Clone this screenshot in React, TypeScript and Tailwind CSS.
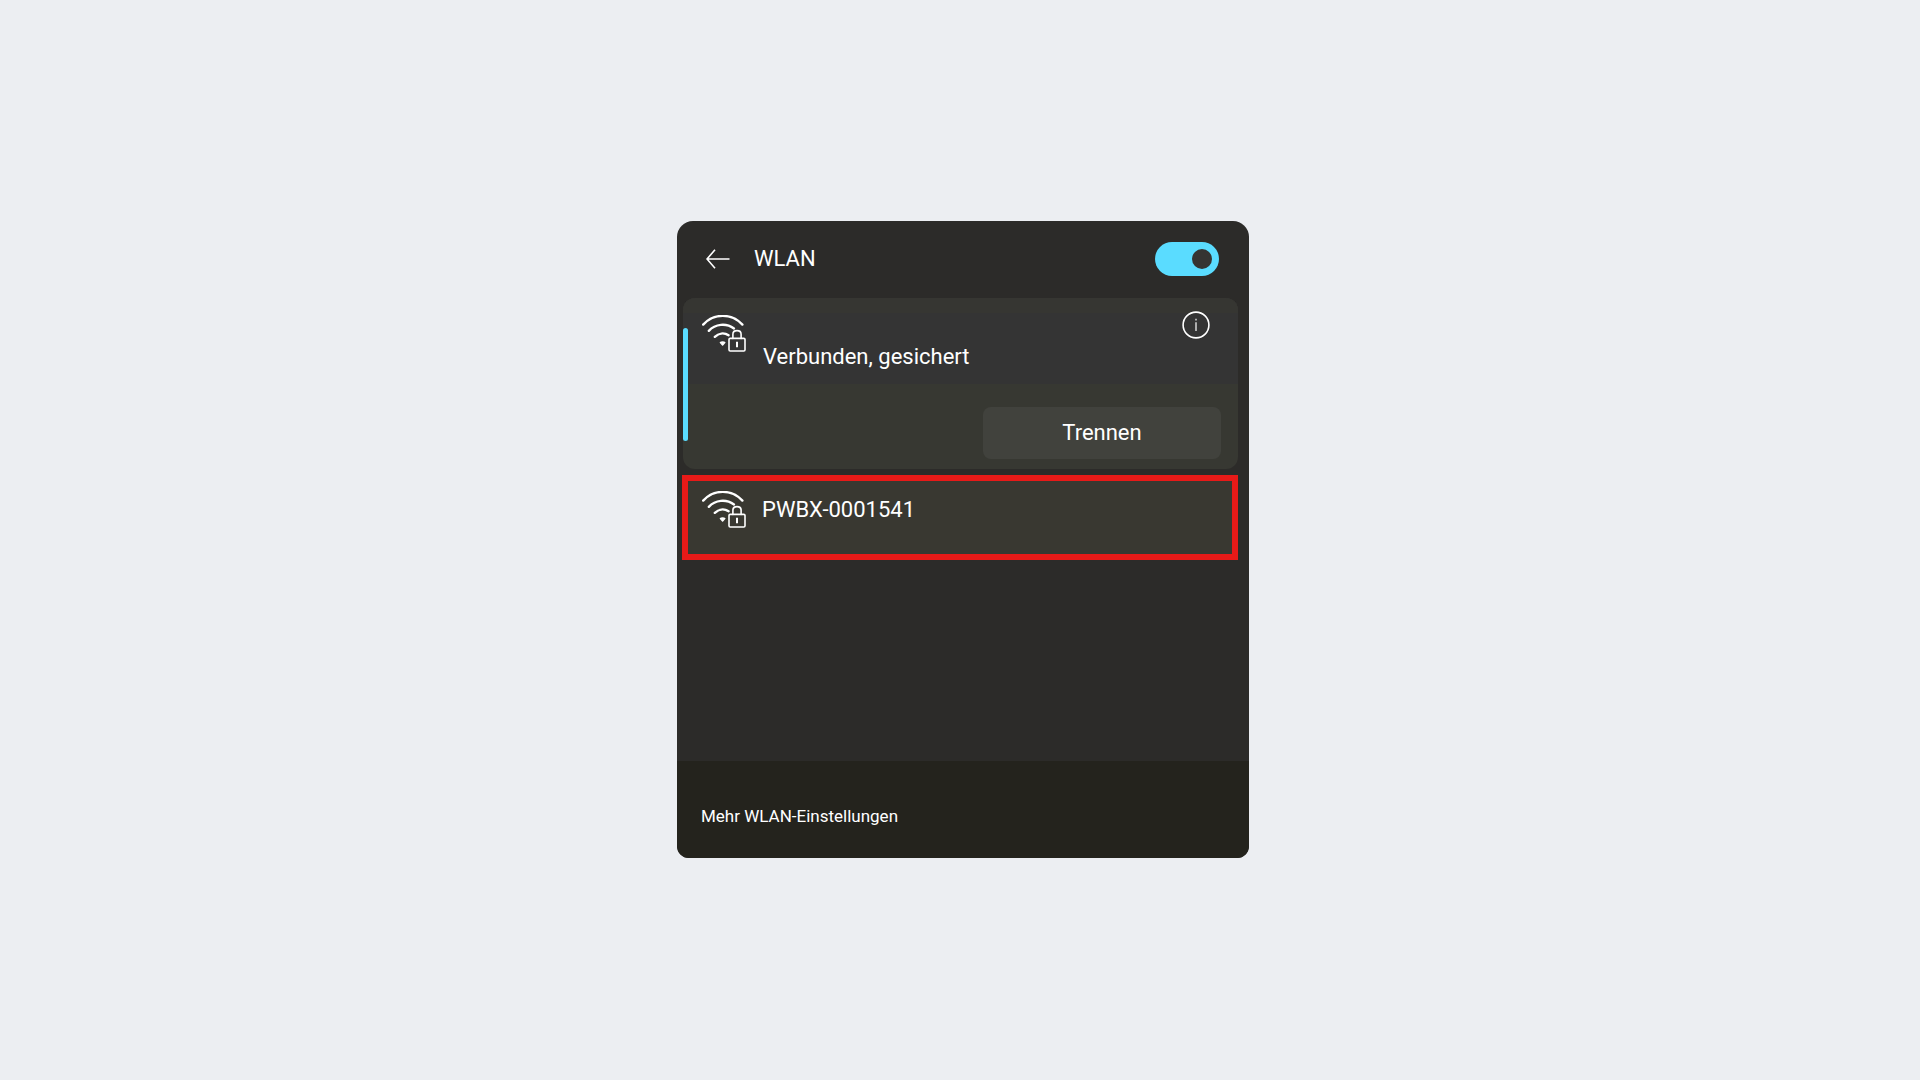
import { useState } from "react";

function SecuredWifiIcon() {
  return (
    <svg
      viewBox="0 0 44 38"
      className="h-[38px] w-11 shrink-0"
      fill="none"
      stroke="currentColor"
      strokeLinecap="round"
      strokeLinejoin="round"
      aria-hidden="true"
    >
      <g strokeWidth="2.4">
        <path d="M1.2 9.6C12 -2 29.5 -2 40.4 9.6" />
        <path d="M6.8 15.8C13.4 8.9 24 7.8 32 13.4" />
        <path d="M12.8 21.8C16.6 18.2 22 17.4 26.6 20.2" />
      </g>
      <path
        d="M18.4 27.6C19.4 26.8 21.8 26.8 22.8 27.6L20.6 30Z"
        fill="currentColor"
        strokeWidth="1.4"
      />
      <rect x="27" y="23.4" width="16" height="12.6" rx="1.2" strokeWidth="1.6" />
      <path d="M30.9 23.4V19.2C30.9 14.4 39.1 14.4 39.1 19.2V23.4" strokeWidth="1.6" />
      <path d="M35 26.8V32.2" strokeWidth="2" strokeLinecap="butt" />
    </svg>
  );
}

function BackIcon() {
  return (
    <svg
      viewBox="0 0 24 20"
      className="h-5 w-6"
      fill="none"
      stroke="currentColor"
      strokeWidth="1.6"
      aria-hidden="true"
    >
      <path d="M23.5 10H1M9 .8L1 10L9 19.2" />
    </svg>
  );
}

function InfoIcon() {
  return (
    <svg viewBox="0 0 28 28" className="size-7" fill="none" stroke="currentColor" aria-hidden="true">
      <circle cx="14" cy="14" r="12.9" strokeWidth="1.6" />
      <path d="M14 11.2V20M14 7.8V9.4" strokeWidth="1.2" />
    </svg>
  );
}

export default function App() {
  const [enabled, setEnabled] = useState(true);

  return (
    <main className="flex min-h-screen items-center justify-center bg-[#eceef2] pb-0.5 pl-1.5 font-[Roboto,sans-serif] text-white">
      <section className="flex w-full max-w-[572px] flex-col overflow-hidden rounded-2xl rounded-b-xl bg-[#2c2b29]">
        <header className="flex h-[77px] items-center pr-[30px] pl-[29px]">
          <button type="button" aria-label="Zurück" className="flex">
            <BackIcon />
          </button>
          <h1 className="ml-6 text-[22px] leading-7">WLAN</h1>
          <label className="relative ml-auto flex h-[34px] w-16 cursor-pointer items-center rounded-full bg-[#5adcff] p-[7px]">
            <input
              type="checkbox"
              role="switch"
              aria-label="WLAN"
              checked={enabled}
              onChange={(e) => setEnabled(e.target.checked)}
              className="peer absolute inset-0 cursor-pointer opacity-0"
            />
            <span className="size-5 rounded-full bg-[#353432] peer-checked:ml-auto" />
          </label>
        </header>

        <div className="flex flex-col gap-1.5 pr-[11px] pl-[5px]">
          <article className="relative ml-px overflow-hidden rounded-xl bg-[#373832]">
            <span className="absolute top-[30px] left-0 h-[113px] w-[5px] rounded-sm bg-[#5adcff]" />
            <div className="border-t-[15px] border-[#363632] bg-[#343434]">
              <div className="flex h-[71px] items-start pr-7 pl-[19px]">
                <span className="mt-0.5">
                  <SecuredWifiIcon />
                </span>
                <p className="mt-[30px] ml-[17px] text-[22px] leading-7">Verbunden, gesichert</p>
                <button type="button" aria-label="Informationen" className="-mt-0.5 ml-auto">
                  <InfoIcon />
                </button>
              </div>
            </div>
            <div className="flex justify-end pt-[23px] pr-[17px] pb-2.5">
              <button
                type="button"
                className="h-[52px] w-[238px] rounded-lg bg-[#41423d] text-[22px] leading-7"
              >
                Trennen
              </button>
            </div>
          </article>

          <button
            type="button"
            className="flex h-[85px] items-start border-[6px] border-[#e81a18] bg-[#393831] pt-2.5 pl-3.5 text-left text-[22px] leading-7"
          >
            <SecuredWifiIcon />
            <span className="mt-[5px] ml-4">PWBX-0001541</span>
          </button>
        </div>

        <footer className="mt-[201px] flex h-[97px] items-center bg-[#24231d] px-6">
          <a href="#wlan-einstellungen" className="mt-3.5 text-[17px] leading-7">
            Mehr WLAN-Einstellungen
          </a>
        </footer>
      </section>
    </main>
  );
}
